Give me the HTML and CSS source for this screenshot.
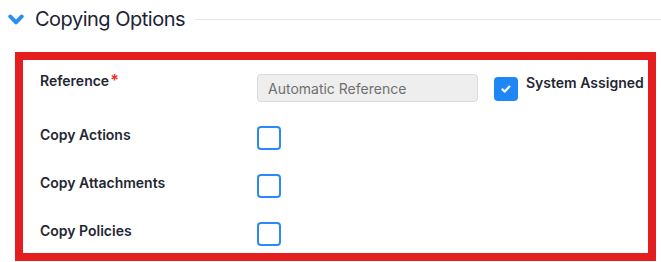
FILE: index.html
```html
<!DOCTYPE html>
<html lang="en">
<head>
    <meta charset="UTF-8">
    <meta name="viewport" content="width=device-width, initial-scale=1.0">
    <title>Copying Options</title>
    <link rel="stylesheet" href="styles.css">
</head>
<body>
    <div class="section-header">
        <svg class="chevron" width="16" height="11" viewBox="0 0 16 11">
            <path d="M2.2 2.4 L8 8.4 L13.8 2.4" fill="none" stroke="#2a8af6" stroke-width="3.8" stroke-linecap="round" stroke-linejoin="round"/>
        </svg>
        <h2>Copying Options</h2>
        <div class="rule"></div>
    </div>

    <div class="options-box">
        <div class="option-row first">
            <label class="field-label">Reference<span class="required">*</span></label>
            <div class="reference-controls">
                <input type="text" class="text-input" placeholder="Automatic Reference" disabled>
                <label class="check-label">
                    <span class="checkbox checked">
                        <svg width="12" height="10" viewBox="0 0 12 10">
                            <path d="M2.4 5.4 L4.8 7.6 L9.4 2.6" fill="none" stroke="#fff" stroke-width="2.2" stroke-linecap="round" stroke-linejoin="round"/>
                        </svg>
                    </span>
                    <span class="check-text">System Assigned</span>
                </label>
            </div>
        </div>
        <div class="option-row">
            <label class="field-label">Copy Actions</label>
            <span class="checkbox"></span>
        </div>
        <div class="option-row">
            <label class="field-label">Copy Attachments</label>
            <span class="checkbox"></span>
        </div>
        <div class="option-row">
            <label class="field-label">Copy Policies</label>
            <span class="checkbox"></span>
        </div>
    </div>
</body>
</html>
```

FILE: styles.css
```css
body {
    font-family: 'Inter', 'Liberation Sans', sans-serif;
    margin: 0;
    padding: 0;
    background-color: #fff;
    color: #1f2733;
}

.section-header {
    display: flex;
    align-items: center;
    height: 38px;
    padding-left: 8px;
}

.chevron {
    flex-shrink: 0;
    margin-top: 1px;
}

.section-header h2 {
    margin: 0 0 0 11px;
    font-size: 20px;
    font-weight: 400;
    letter-spacing: -0.5px;
    color: #1c2432;
    white-space: nowrap;
}

.rule {
    flex: 1;
    height: 1px;
    margin-left: 10px;
    background-color: #e6e6e6;
}

.options-box {
    margin: 14px 5px 0 15px;
    border: 8px solid #e41e1e;
    padding: 10px 17px 7px;
    display: flex;
    flex-direction: column;
    gap: 23px;
}

.option-row {
    display: flex;
    align-items: flex-start;
}

.option-row .checkbox {
    margin-top: 1px;
}

.field-label {
    width: 217px;
    flex-shrink: 0;
    font-size: 14px;
    font-weight: 600;
    line-height: 20px;
    color: #1f2733;
}

.required {
    color: #ef2b2b;
    margin-left: 1px;
    font-size: 16px;
}

.reference-controls {
    display: flex;
    align-items: flex-start;
}

.text-input {
    width: 221px;
    height: 28px;
    margin-top: 4px;
    padding: 0 10px;
    box-sizing: border-box;
    border: 1px solid #dcdcdc;
    border-radius: 4px;
    background-color: #eeeeee;
    font-family: inherit;
    font-size: 14px;
}

.text-input::placeholder {
    color: #707070;
}

.check-label {
    display: flex;
    align-items: flex-start;
    margin-left: 16px;
}

.check-label .checkbox {
    margin-top: 7px;
}

.check-text {
    margin: 3px 0 0 8px;
    font-size: 14px;
    font-weight: 600;
    line-height: 20px;
    white-space: nowrap;
}

.checkbox {
    display: flex;
    align-items: center;
    justify-content: center;
    width: 24px;
    height: 24px;
    box-sizing: border-box;
    border: 2px solid #2a8af6;
    border-radius: 4px;
    background-color: #fff;
}

.checkbox.checked {
    background-color: #1f86f5;
    border-color: #1f86f5;
}
```
